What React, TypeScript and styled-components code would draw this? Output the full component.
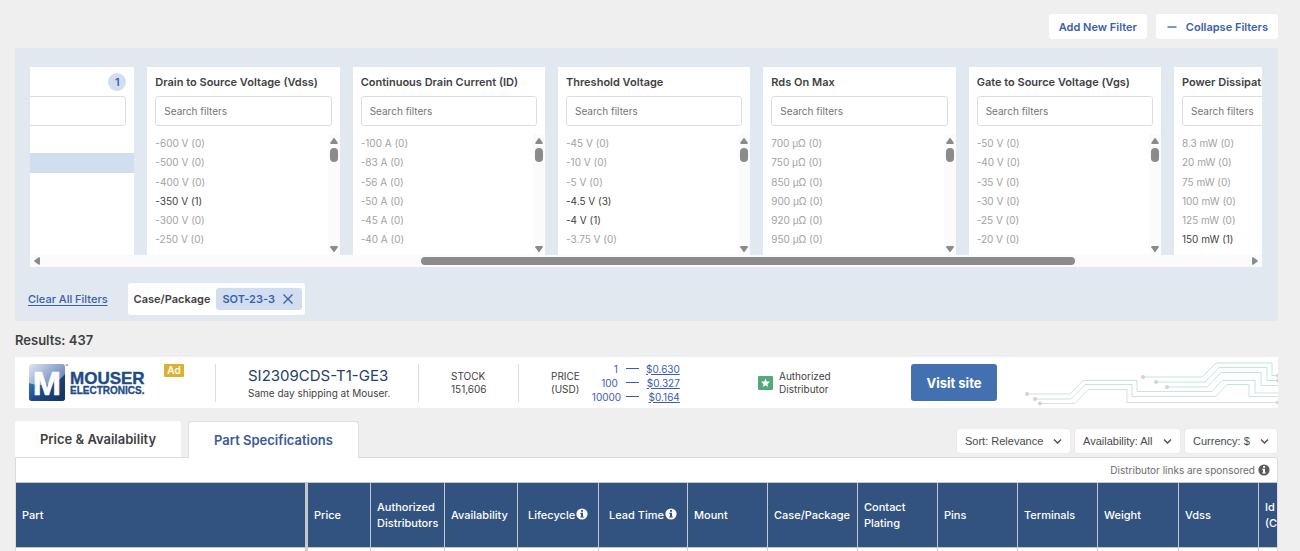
import React from "react";
import styled, { createGlobalStyle, css } from "styled-components";

const Global = createGlobalStyle`
  * { box-sizing: border-box; }
  body {
    margin: 0;
    background: #efefef;
    color: #3f3f3f;
    font-family: Inter, "Liberation Sans", sans-serif;
    font-size: 11px;
  }
  button, input, select { font: inherit; }
`;

const Page = styled.main`
  display: flex;
  flex-direction: column;
  height: 100vh;
  overflow: hidden;
  padding: 14px 22px 0 15px;
  & > * { flex-shrink: 0; }
`;

const Toolbar = styled.div`
  display: flex;
  justify-content: flex-end;
  gap: 9px;
  margin-bottom: 9px;
`;

const ToolButton = styled.button`
  display: flex;
  align-items: center;
  gap: 9px;
  height: 25px;
  padding: 0 10px;
  border: 0;
  border-radius: 3px;
  background: #fff;
  color: #3a60ad;
  font-weight: 600;
`;

const FilterPanel = styled.section`
  padding: 19px 16px 6px 15px;
  background: #e1e8f0;
`;

const FilterViewport = styled.div`
  height: 188px;
  overflow: hidden;
`;

const FilterTrack = styled.div`
  display: flex;
  gap: 13px;
  margin-left: -88px;
  margin-right: 88px;
`;

const Card = styled.article`
  flex: 0 0 calc(100% / 6 - 13px);
  height: 188px;
  display: flex;
  flex-direction: column;
  overflow: hidden;
  background: #fff;
`;

const CardHead = styled.div`
  display: flex;
  align-items: center;
  justify-content: space-between;
  height: 29px;
  padding: 0 8px;
`;

const CardTitle = styled.h2`
  margin: 0;
  font-size: 11px;
  font-weight: 600;
  white-space: nowrap;
`;

const Count = styled.span`
  display: grid;
  place-items: center;
  width: 18px;
  height: 18px;
  margin-left: auto;
  border-radius: 50%;
  background: #d0deef;
  color: #3a60ad;
  font-size: 11px;
  font-weight: 600;
`;

const SearchInput = styled.input`
  height: 30px;
  margin: 0 8px;
  padding: 0 8px;
  min-width: 0;
  border: 1px solid #dedede;
  border-radius: 3px;
  background: #fff;
  font-size: 10px;
  &::placeholder { color: #757575; opacity: 1; }
`;

const CardBody = styled.div`
  display: flex;
  justify-content: space-between;
  height: 121px;
  margin-top: 8px;
  overflow: hidden;
`;

const OptionList = styled.ul`
  flex: 1;
  display: grid;
  grid-template-rows: repeat(7, 1fr);
  height: 135px;
  margin: 0;
  padding: 0;
  list-style: none;
`;

const Option = styled.li<{ $on?: boolean; $selected?: boolean }>`
  padding: 0 8px;
  line-height: 19px;
  font-size: 10px;
  white-space: nowrap;
  color: ${(p) => (p.$on ? "#3f3f3f" : "#a2a2a2")};
  background: ${(p) => (p.$selected ? "#d0deef" : "transparent")};
`;

const Scrollbar = styled.div<{ $horizontal?: boolean }>`
  display: flex;
  align-items: center;
  background: #fbfbfb;
  ${(p) =>
    p.$horizontal
      ? css`height: 12px; padding: 0 3px;`
      : css`flex-direction: column; width: 12px; padding: 3px 0 2px;`}
`;

const Arrow = styled.svg<{ $turn: number }>`
  display: block;
  flex: none;
  width: 8px;
  height: 8px;
  transform: rotate(${(p) => p.$turn}deg);
`;

const VThumb = styled.div`
  width: 8px;
  height: 14px;
  margin: 3px 0 auto;
  border-radius: 4px;
  background: #8b8b8b;
`;

const HRail = styled.div`
  flex: 1;
  padding: 0 14% 0 31%;
  margin-right: 4px;
`;

const HThumb = styled.div`
  height: 8px;
  border-radius: 4px;
  background: #8b8b8b;
`;

const ActiveFilters = styled.div`
  display: flex;
  align-items: center;
  gap: 20px;
  margin: 16px 0 0 -2px;
`;

const ClearLink = styled.a`
  color: #3a60ad;
  font-weight: 500;
  text-underline-offset: 2px;
`;

const FilterTag = styled.div`
  display: flex;
  align-items: center;
  gap: 6px;
  height: 32px;
  padding: 0 3px 0 6px;
  border-radius: 3px;
  background: #fff;
  font-weight: 600;
`;

const TagButton = styled.button`
  display: flex;
  align-items: center;
  gap: 8px;
  height: 22px;
  padding: 0 9px 0 6px;
  border: 0;
  border-radius: 3px;
  background: #d0deef;
  color: #3a60ad;
  font-weight: 600;
`;

const Results = styled.p`
  margin: 10px 0 8px;
  line-height: 18px;
  font-size: 13px;
  font-weight: 600;
`;

const AdBar = styled.section`
  display: flex;
  align-items: center;
  height: 51px;
  background: #fff;
`;

const AdCell = styled.div<{ $width: number; $pad: number; $rule?: boolean }>`
  display: flex;
  align-items: center;
  gap: 6px;
  flex: none;
  width: ${(p) => p.$width}px;
  height: 38px;
  padding-left: ${(p) => p.$pad}px;
  border-right: ${(p) => (p.$rule ? "1px solid #dcdcdc" : "0")};
`;

const AdBadge = styled.span`
  align-self: flex-start;
  margin-left: 11px;
  width: 20px;
  height: 13px;
  border-radius: 1px;
  background: #dbb12f;
  color: #fff;
  line-height: 13px;
  font-size: 10px;
  font-weight: 600;
  text-align: center;
`;

const PartName = styled.div`
  margin-top: 2px;
  color: #263f66;
  font-size: 15px;
  line-height: 18px;
`;

const Small = styled.div<{ $tall?: boolean }>`
  font-size: 10px;
  line-height: ${(p) => (p.$tall ? 16 : 13)}px;
  white-space: nowrap;
`;

const PriceList = styled.ul`
  margin: 0 0 0 6px;
  padding: 0;
  list-style: none;
`;

const PriceRow = styled.li`
  display: grid;
  grid-template-columns: 26px 14px 34px;
  column-gap: 7px;
  align-items: center;
  height: 14px;
  line-height: 14px;
  color: #3a60ad;
  font-size: 10px;
  text-align: right;
  white-space: nowrap;
  a { color: inherit; }
`;

const Dash = styled.span`
  height: 1px;
  margin-left: 1px;
  background: #3a60ad;
`;

const VisitButton = styled.button`
  flex: none;
  width: 86px;
  height: 37px;
  border: 0;
  border-radius: 3px;
  background: #4370b0;
  color: #fff;
  font-size: 13px;
  font-weight: 700;
`;

const Circuit = styled.svg`
  display: block;
  width: 256px;
  height: 51px;
  margin-left: auto;
  fill: none;
`;

const TabRow = styled.div`
  display: flex;
  align-items: flex-end;
  margin-top: 13px;
`;

const Tab = styled.button<{ $active?: boolean }>`
  width: 166px;
  height: 36px;
  padding: 0;
  border: 0;
  border-radius: 3px 3px 0 0;
  background: #fff;
  color: #3f3f3f;
  font-size: 13px;
  font-weight: 600;
  ${(p) =>
    p.$active &&
    css`
      width: 171px;
      height: 37px;
      margin: 0 0 -1px 7px;
      border: 1px solid #dfdfdf;
      border-bottom: 0;
      color: #3a5a94;
      position: relative;
    `}
`;

const Selects = styled.div`
  display: flex;
  gap: 3px;
  margin-left: auto;
  padding-bottom: 3px;
`;

const SelectBox = styled.div<{ $width: number }>`
  position: relative;
  width: ${(p) => p.$width}px;
  svg {
    position: absolute;
    right: 9px;
    top: 10px;
    pointer-events: none;
  }
`;

const Select = styled.select`
  display: block;
  width: 100%;
  height: 26px;
  padding: 0 8px;
  appearance: none;
  border: 1px solid #ebebeb;
  border-radius: 4px;
  background: #fff;
  color: #4a4a4a;
  font-family: "Liberation Sans", Arial, sans-serif;
  font-size: 11px;
`;

const TableBox = styled.section`
  border: 1px solid #dcdcdc;
  border-radius: 0 3px 0 0;
  overflow: hidden;
  background: #fff;
`;

const Sponsored = styled.div`
  display: flex;
  align-items: center;
  justify-content: flex-end;
  gap: 3px;
  height: 24px;
  padding-right: 7px;
  color: #6d6d6d;
  font-size: 10px;
`;

const SpecTable = styled.table`
  width: 1323px;
  table-layout: fixed;
  border-collapse: separate;
  border-spacing: 0;
`;

const HeadCell = styled.th<{ $first?: boolean; $wide?: boolean }>`
  height: 66px;
  padding: 0 0 0 ${(p) => (p.$wide ? 10 : 6)}px;
  border: solid #c4c7cc;
  border-width: 1px ${(p) => (p.$first ? 3 : 1)}px 1px 0;
  background: #32527f;
  color: #fff;
  line-height: 16px;
  font-size: 11px;
  font-weight: 500;
  text-align: left;
  svg { margin-left: 1px; vertical-align: -1px; }
`;

const BodyCell = styled.td<{ $first?: boolean }>`
  height: 40px;
  border-right: ${(p) => (p.$first ? 3 : 1)}px solid #cfcfcf;
`;

const cards = [
  { title: "Drain to Source Voltage (Vdss)", options: ["-600 V (0)", "-500 V (0)", "-400 V (0)", "-350 V (1)", "-300 V (0)", "-250 V (0)", "-240 V (1)"] },
  { title: "Continuous Drain Current (ID)", options: ["-100 A (0)", "-83 A (0)", "-56 A (0)", "-50 A (0)", "-45 A (0)", "-40 A (0)", "-35 A (0)"] },
  { title: "Threshold Voltage", options: ["-45 V (0)", "-10 V (0)", "-5 V (0)", "-4.5 V (3)", "-4 V (1)", "-3.75 V (0)", "-3.5 V (0)"] },
  { title: "Rds On Max", options: ["700 µΩ (0)", "750 µΩ (0)", "850 µΩ (0)", "900 µΩ (0)", "920 µΩ (0)", "950 µΩ (0)", "1 mΩ (0)"] },
  { title: "Gate to Source Voltage (Vgs)", options: ["-50 V (0)", "-40 V (0)", "-35 V (0)", "-30 V (0)", "-25 V (0)", "-20 V (0)", "-16 V (0)"] },
  { title: "Power Dissipation", options: ["8.3 mW (0)", "20 mW (0)", "75 mW (0)", "100 mW (0)", "125 mW (0)", "150 mW (1)", "200 mW (0)"] },
];

const prices = [
  ["1", "$0.630"],
  ["100", "$0.327"],
  ["10000", "$0.164"],
];

const columns: { label: string; width: number; info?: boolean }[] = [
  { label: "Part", width: 292 },
  { label: "Price", width: 63 },
  { label: "Authorized Distributors", width: 74 },
  { label: "Availability", width: 73 },
  { label: "Lifecycle", width: 81, info: true },
  { label: "Lead Time", width: 89, info: true },
  { label: "Mount", width: 80 },
  { label: "Case/Package", width: 90 },
  { label: "Contact Plating", width: 80 },
  { label: "Pins", width: 80 },
  { label: "Terminals", width: 80 },
  { label: "Weight", width: 81 },
  { label: "Vdss", width: 80 },
  { label: "Id (Continuous)", width: 80 },
];

const Triangle = ({ turn = 0 }: { turn?: number }) => (
  <Arrow $turn={turn} viewBox="0 0 8 8" aria-hidden="true">
    <path d="M3.2 1.6Q4 .6 4.8 1.6L7.7 5.8Q8 7 7 7H1Q0 7 .3 5.8Z" fill="#8b8b8b" />
  </Arrow>
);

const Info = ({ fill, mark }: { fill: string; mark: string }) => (
  <svg width="12" height="12" viewBox="0 0 12 12" aria-hidden="true">
    <circle cx="6" cy="6" r="5.6" fill={fill} />
    <path d="M5 2.1h2v1.7H5zM4.3 4.8H7v3.6h.8v1.2H4.3V8.4H5V6h-.7z" fill={mark} />
  </svg>
);

const MouserLogo = () => (
  <svg width="118" height="39" viewBox="0 0 118 39" role="img" aria-label="Mouser Electronics">
    <defs>
      <linearGradient id="tile" x1="0" y1="0" x2="1" y2="1">
        <stop offset="0" stopColor="#dfe5f1" />
        <stop offset="0.45" stopColor="#8fa5cb" />
        <stop offset="1" stopColor="#3f66a3" />
      </linearGradient>
      <linearGradient id="wave" x1="0" y1="0" x2="1" y2="0.6">
        <stop offset="0" stopColor="#3b8fcc" />
        <stop offset="0.5" stopColor="#1f4b86" />
        <stop offset="1" stopColor="#173765" />
      </linearGradient>
    </defs>
    <rect x="0" y="1" width="36" height="37" rx="3" fill="url(#tile)" />
    <path d="M0 20C12 24 27 23 36 11V35Q36 38 33 38H3Q0 38 0 35Z" fill="url(#wave)" />
    <g fontFamily="Liberation Sans, Arial, sans-serif" fontWeight="700">
      <text x="18" y="32" fontSize="34" textAnchor="middle" fill="#fff" stroke="#fff" strokeWidth="0.6">M</text>
      <text x="41" y="21" fontSize="17" fill="#1f4b86" stroke="#1f4b86" strokeWidth="0.4">MOUSER</text>
      <text x="41" y="31" fontSize="10" fill="#1f4b86" stroke="#1f4b86" strokeWidth="0.3">ELECTRONICS.</text>
    </g>
    <path d="M36.500 2h2.500" stroke="#1f4b86" strokeWidth="0.8" />
  </svg>
);

const Chevron = () => (
  <svg width="9" height="7" viewBox="0 0 9 7" fill="none" aria-hidden="true">
    <path d="M1 1.500L4.500 5L8 1.500" stroke="#4a4a4a" strokeWidth="1.300" />
  </svg>
);

const traces = [
  "M5 37H48L61 23.500H115V34.500H190L200 23.500H233V36H257",
  "M13 42H49L63 27.500H110V39.500H194L205 27.500H227V39.500H257",
  "M18 46.500H53L66 32.500H105V45.500H257",
  "M121 20H180L194 6H250V18.500H257",
  "M134 25H183L197 10.500H245V23.500H257",
  "M145 30H185L199 15.500H239V28.500H257",
];
const pads = [[5, 37], [13, 42], [18, 46.5], [121, 20], [134, 25], [145, 30], [256, 18.5], [256, 23.5], [256, 45.5]];

const CircuitArt = () => (
  <Circuit viewBox="0 0 256 51" aria-hidden="true">
    <defs>
      <linearGradient id="trace" gradientUnits="userSpaceOnUse" x1="0" y1="48" x2="0" y2="4">
        <stop offset="0" stopColor="#dcdfd8" />
        <stop offset="0.45" stopColor="#c9e3da" />
        <stop offset="1" stopColor="#bfe4d8" />
      </linearGradient>
    </defs>
    {traces.map((d) => <path key={d} d={d} stroke="url(#trace)" />)}
    {pads.map(([x, y]) => <circle key={`${x}-${y}`} cx={x} cy={y} r="2" fill="#d3d4cf" />)}
  </Circuit>
);

const FilterCard = ({ title, options }: { title: string; options: string[] }) => (
  <Card>
    <CardHead><CardTitle>{title}</CardTitle></CardHead>
    <SearchInput type="text" placeholder="Search filters" aria-label={`Search ${title}`} />
    <CardBody>
      <OptionList>
        {options.map((o) => <Option key={o} $on={!o.endsWith("(0)")}>{o}</Option>)}
      </OptionList>
      <Scrollbar>
        <Triangle />
        <VThumb />
        <Triangle turn={180} />
      </Scrollbar>
    </CardBody>
  </Card>
);

const Dropdown = ({ label, width }: { label: string; width: number }) => (
  <SelectBox $width={width}>
    <Select aria-label={label.split(":")[0]}><option>{label}</option></Select>
    <Chevron />
  </SelectBox>
);

export default function App() {
  return (
    <Page>
      <Global />
      <Toolbar>
        <ToolButton>Add New Filter</ToolButton>
        <ToolButton>
          <svg width="11" height="10" viewBox="0 0 11 10" aria-hidden="true">
            <path d="M1.500 5H10.500" stroke="#3a60ad" strokeWidth="1.300" />
          </svg>
          Collapse Filters
        </ToolButton>
      </Toolbar>

      <FilterPanel>
        <FilterViewport>
          <FilterTrack>
            <Card>
              <CardHead><Count>1</Count></CardHead>
              <SearchInput type="text" aria-label="Search packages" />
              <CardBody>
                <OptionList>
                  <Option />
                  <Option $selected />
                </OptionList>
              </CardBody>
            </Card>
            {cards.map((c) => <FilterCard key={c.title} {...c} />)}
          </FilterTrack>
        </FilterViewport>
        <Scrollbar $horizontal>
          <Triangle turn={-90} />
          <HRail><HThumb /></HRail>
          <Triangle turn={90} />
        </Scrollbar>
        <ActiveFilters>
          <ClearLink href="#clear">Clear All Filters</ClearLink>
          <FilterTag>
            Case/Package
            <TagButton>
              SOT-23-3
              <svg width="10" height="10" viewBox="0 0 10 10" aria-hidden="true">
                <path d="M.5.5l9 9M9.500.5l-9 9" stroke="#3a60ad" strokeWidth="1.300" />
              </svg>
            </TagButton>
          </FilterTag>
        </ActiveFilters>
      </FilterPanel>

      <Results>Results: 437</Results>

      <AdBar>
        <AdCell $width={201} $pad={14} $rule>
          <MouserLogo />
          <AdBadge>Ad</AdBadge>
        </AdCell>
        <AdCell $width={203} $pad={32} $rule>
          <div>
            <PartName>SI2309CDS-T1-GE3</PartName>
            <Small $tall>Same day shipping at Mouser.</Small>
          </div>
        </AdCell>
        <AdCell $width={100} $pad={32} $rule>
          <Small>STOCK<br />151,606</Small>
        </AdCell>
        <AdCell $width={224} $pad={32}>
          <Small>PRICE<br />(USD)</Small>
          <PriceList>
            {prices.map(([qty, price]) => (
              <PriceRow key={qty}>
                <span>{qty}</span>
                <Dash />
                <a href="#buy">{price}</a>
              </PriceRow>
            ))}
          </PriceList>
        </AdCell>
        <AdCell $width={168} $pad={15}>
          <svg width="15" height="14" viewBox="0 0 15 14" aria-hidden="true">
            <rect width="15" height="14" rx="1" fill="#55a77d" />
            <path d="M7.500 2.500l1.200 3.100 3.300.2-2.600 2.100.9 3.200-2.800-1.800-2.800 1.800.9-3.200L3 5.800l3.300-.2z" fill="#fff" />
          </svg>
          <Small>Authorized<br />Distributor</Small>
        </AdCell>
        <VisitButton>Visit site</VisitButton>
        <CircuitArt />
      </AdBar>

      <TabRow>
        <Tab>Price &amp; Availability</Tab>
        <Tab $active>Part Specifications</Tab>
        <Selects>
          <Dropdown label="Sort: Relevance" width={115} />
          <Dropdown label="Availability: All" width={107} />
          <Dropdown label="Currency: $" width={94} />
        </Selects>
      </TabRow>

      <TableBox>
        <Sponsored>
          Distributor links are sponsored
          <Info fill="#5a5a5a" mark="#fff" />
        </Sponsored>
        <SpecTable>
          <colgroup>
            {columns.map((c) => <col key={c.label} width={c.width} />)}
          </colgroup>
          <thead>
            <tr>
              {columns.map((c, i) => (
                <HeadCell key={c.label} $first={i === 0} $wide={c.info} scope="col">
                  {c.label}
                  {c.info && <Info fill="#fff" mark="#32527f" />}
                </HeadCell>
              ))}
            </tr>
          </thead>
          <tbody>
            <tr>
              {columns.map((c, i) => <BodyCell key={c.label} $first={i === 0} />)}
            </tr>
          </tbody>
        </SpecTable>
      </TableBox>
    </Page>
  );
}
